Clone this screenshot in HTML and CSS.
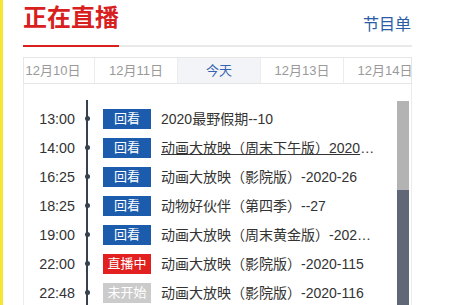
FILE: index.html
```html
<!DOCTYPE html>
<html lang="zh-CN">
<head>
<meta charset="utf-8">
<title>正在直播</title>
<link rel="stylesheet" href="styles.css">
</head>
<body>
<div class="page">
  <div class="panel">
    <div class="header">
      <h2 class="title">正在直播</h2>
      <a class="more">节目单</a>
    </div>
    <div class="tabs">
      <div class="tab-track">
        <div class="tab">12月10日</div>
        <div class="tab">12月11日</div>
        <div class="tab active">今天</div>
        <div class="tab">12月13日</div>
        <div class="tab">12月14日</div>
      </div>
    </div>
    <div class="list">
      <div class="rows">
        <div class="row"><span class="time">13:00</span><span class="dot"></span><span class="badge replay">回看</span><span class="name">2020最野假期--10</span></div>
        <div class="row"><span class="time">14:00</span><span class="dot"></span><span class="badge replay">回看</span><span class="name hover">动画大放映（周末下午版）2020-12-12</span></div>
        <div class="row"><span class="time">16:25</span><span class="dot"></span><span class="badge replay">回看</span><span class="name">动画大放映（影院版）-2020-26</span></div>
        <div class="row"><span class="time">18:25</span><span class="dot"></span><span class="badge replay">回看</span><span class="name">动物好伙伴（第四季）--27</span></div>
        <div class="row"><span class="time">19:00</span><span class="dot"></span><span class="badge replay">回看</span><span class="name">动画大放映（周末黄金版）-2020-12-12</span></div>
        <div class="row"><span class="time">22:00</span><span class="dot"></span><span class="badge live">直播中</span><span class="name">动画大放映（影院版）-2020-115</span></div>
        <div class="row"><span class="time">22:48</span><span class="dot"></span><span class="badge soon">未开始</span><span class="name">动画大放映（影院版）-2020-116</span></div>
      </div>
      <div class="scrollbar"><div class="thumb"></div></div>
    </div>
  </div>
</div>
</body>
</html>
```
FILE: styles.css
```css
html, body {
  margin: 0;
  padding: 0;
  background: #fff;
  width: 460px;
  height: 305px;
  overflow: hidden;
  font-family: "Liberation Sans", "Noto Sans CJK SC", sans-serif;
}

.page {
  height: 305px;
  border-left: 3px solid #f6e634;
  padding-left: 20px;
}

.panel {
  width: 389px;
}

.header {
  display: flex;
  justify-content: space-between;
  align-items: flex-start;
  height: 45px;
  border-bottom: 2px solid #e9e9e9;
}

.title {
  margin: 0 0 -2px 0;
  padding-top: 6px;
  height: 39px;
  font-size: 24px;
  line-height: 24px;
  font-weight: bold;
  color: #d8201f;
  border-bottom: 2px solid #d8201f;
}

.more {
  margin-top: 16px;
  margin-right: 1px;
  font-size: 16px;
  line-height: 18px;
  color: #2a5ca6;
}

.tabs {
  margin-top: 10px;
  border: 1px solid #e6e6e6;
  overflow: hidden;
}

.tab-track {
  display: flex;
  margin-left: -12px;
}

.tab {
  flex: 0 0 83px;
  box-sizing: border-box;
  height: 25px;
  line-height: 25px;
  text-align: center;
  font-size: 13px;
  color: #9a9a9a;
  border-right: 1px solid #ececec;
}

.tab.active {
  background: #f2f4f7;
  color: #3563b0;
}

.list {
  display: flex;
  border-left: 1px solid #ececec;
  border-right: 1px solid #ececec;
  height: 221px;
  overflow: hidden;
}

.rows {
  position: relative;
  flex: 1;
  padding-top: 20px;
  overflow: hidden;
}

.rows::before {
  content: "";
  position: absolute;
  left: 62px;
  top: 16px;
  bottom: 0;
  width: 1.5px;
  background: #37424f;
}

.row {
  display: flex;
  align-items: center;
  height: 29px;
}

.time {
  width: 51px;
  text-align: right;
  font-size: 14.3px;
  color: #333;
  line-height: 20px;
}

.dot {
  position: relative;
  width: 24px;
  height: 20px;
}

.dot::after {
  content: "";
  position: absolute;
  left: 9.5px;
  top: 7.5px;
  width: 5px;
  height: 5px;
  border-radius: 50%;
  background: #37424f;
}

.badge {
  margin-left: 4px;
  width: 48px;
  height: 20px;
  line-height: 20px;
  text-align: center;
  font-size: 13px;
  color: #fff;
}

.badge.replay { background: #1b5cac; }
.badge.live { background: #e1201f; }
.badge.soon { background: #cbcbcb; }

.name {
  margin-left: 10px;
  max-width: 215px;
  white-space: nowrap;
  overflow: hidden;
  text-overflow: ellipsis;
  font-size: 14px;
  line-height: 20px;
  color: #333;
}

.name.hover {
  text-decoration: underline;
}

.scrollbar {
  display: flex;
  flex-direction: column;
  width: 12px;
  margin-top: 17px;
  margin-right: 2px;
  background: #b3b3b3;
}

.thumb {
  margin-top: 89px;
  flex: 1;
  background: #606878;
}
```
